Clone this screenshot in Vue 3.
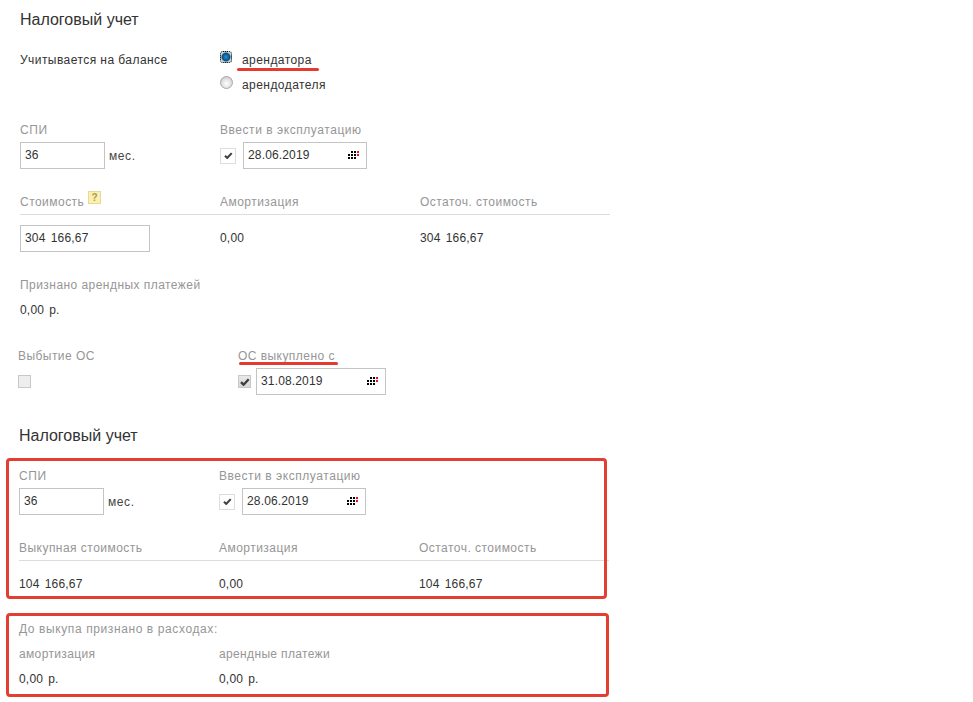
<script setup>
const dots = []
for (let r = 0; r < 3; r++) {
  for (let c = 0; c < 4; c++) {
    if (r === 0 && c === 0) continue
    if (r === 2 && c === 3) continue
    dots.push({ x: c * 3, y: r * 3, fill: c === 3 ? '#e8102a' : '#000' })
  }
}
</script>

<template>
  <main class="page">
    <section class="sec first">
      <h2 class="title">Налоговый учет</h2>

      <div class="grid balance">
        <div class="text">Учитывается на балансе</div>
        <div class="radios">
          <label class="radio-row"><span class="radio on"></span><span class="text">арендатора</span></label>
          <label class="radio-row"><span class="radio"></span><span class="text">арендодателя</span></label>
        </div>
      </div>

      <div class="grid terms">
        <div>
          <div class="label">СПИ</div>
          <div class="field"><div class="input w85">36</div><span class="unit">мес.</span></div>
        </div>
        <div>
          <div class="label">Ввести в эксплуатацию</div>
          <div class="field">
            <span class="check"><svg width="9" height="7" viewBox="0 0 12 10"><path d="M1 5.2 L4.2 8.4 L10.6 1.6" fill="none" stroke="#404040" stroke-width="3"/></svg></span>
            <div class="input date w124">28.06.2019
              <svg class="cal" width="11" height="8" viewBox="0 0 11 8"><rect v-for="(d, i) in dots" :key="i" :x="d.x" :y="d.y" width="2" height="2" :fill="d.fill"/></svg>
            </div>
          </div>
        </div>
      </div>

      <div class="grid head">
        <div class="label has-help">Стоимость<span class="help">?</span></div>
        <div class="label">Амортизация</div>
        <div class="label">Остаточ. стоимость</div>
      </div>
      <div class="grid cost">
        <div class="input w130 num">304 166,67</div>
        <div class="text num">0,00</div>
        <div class="text num">304 166,67</div>
      </div>

      <div class="label recognized">Признано арендных платежей</div>
      <div class="text value num">0,00 р.</div>

      <div class="grid disposal">
        <div>
          <div class="label">Выбытие ОС</div>
          <div class="field"><span class="box off"></span></div>
        </div>
        <div>
          <div class="label">ОС выкуплено с</div>
          <div class="field">
            <span class="box"><svg width="10" height="8" viewBox="0 0 12 10"><path d="M1 5.2 L4.2 8.4 L10.6 1.6" fill="none" stroke="#404040" stroke-width="3"/></svg></span>
            <div class="input date w130">31.08.2019
              <svg class="cal" width="11" height="8" viewBox="0 0 11 8"><rect v-for="(d, i) in dots" :key="i" :x="d.x" :y="d.y" width="2" height="2" :fill="d.fill"/></svg>
            </div>
          </div>
        </div>
      </div>
    </section>

    <section class="sec second">
      <h2 class="title">Налоговый учет</h2>
      <div class="grid terms terms2">
        <div>
          <div class="label">СПИ</div>
          <div class="field"><div class="input w85">36</div><span class="unit">мес.</span></div>
        </div>
        <div>
          <div class="label">Ввести в эксплуатацию</div>
          <div class="field">
            <span class="check"><svg width="9" height="7" viewBox="0 0 12 10"><path d="M1 5.2 L4.2 8.4 L10.6 1.6" fill="none" stroke="#404040" stroke-width="3"/></svg></span>
            <div class="input date w124">28.06.2019
              <svg class="cal" width="11" height="8" viewBox="0 0 11 8"><rect v-for="(d, i) in dots" :key="i" :x="d.x" :y="d.y" width="2" height="2" :fill="d.fill"/></svg>
            </div>
          </div>
        </div>
      </div>
      <div class="grid head">
        <div class="label">Выкупная стоимость</div>
        <div class="label">Амортизация</div>
        <div class="label">Остаточ. стоимость</div>
      </div>
      <div class="grid totals">
        <div class="text num">104 166,67</div>
        <div class="text num">0,00</div>
        <div class="text num">104 166,67</div>
      </div>
      <div class="label before">До выкупа признано в расходах:</div>
      <div class="grid sub">
        <div class="label">амортизация</div>
        <div class="label">арендные платежи</div>
      </div>
      <div class="grid subvals">
        <div class="text num">0,00 р.</div>
        <div class="text num">0,00 р.</div>
      </div>
    </section>

    <i class="mark u1"></i>
    <i class="mark u2"></i>
    <i class="frame f1"></i>
    <i class="frame f2"></i>
  </main>
</template>

<style>
body { background: #fff; }
</style>

<style scoped>
.page {
  position: relative;
  width: 973px;
  height: 702px;
  overflow: hidden;
  background: #fff;
  font-family: "Liberation Sans", Arial, sans-serif;
  font-size: 12px;
  line-height: 16px;
  color: #333;
}
.sec { width: 590px; }
.first { margin-left: 20px; padding-top: 10px; }
.second { margin-left: 19px; margin-top: 31px; }
.title {
  margin: 0;
  font-size: 16px;
  line-height: 20px;
  font-weight: 400;
  color: #333;
}
.grid { display: grid; grid-template-columns: 200px 200px 190px; }
.label, .text { height: 15px; padding-top: 1px; }
.label { color: #969696; letter-spacing: 0.45px; }
.text { color: #333; letter-spacing: 0.44px; }
.num { letter-spacing: 0.2px; word-spacing: 1.5px; }
.balance { margin-top: 21px; }
.radios { display: flex; flex-direction: column; gap: 9px; }
.radio-row { display: flex; align-items: center; gap: 9px; height: 16px; }
.radio {
  box-sizing: border-box;
  width: 13px;
  height: 13px;
  border-radius: 50%;
  border: 1px solid #a8a8a8;
  background: radial-gradient(circle at 50% 60%, #fff 0%, #e6e6e6 45%, #bbb 100%);
  margin-top: -4px;
}
.radio.on {
  width: 12px;
  height: 12px;
  margin-right: 1px;
  border: 1px dotted #111;
  border-radius: 3px;
  background: radial-gradient(circle at 50% 50%, #2a8fd0 0%, #0a6aa8 34%, #0c4a74 52%, #c4d0d8 72%, #e4eaee 100%);
}
.terms { margin-top: 29px; }
.terms2 { margin-top: 21px; }
.terms .label { letter-spacing: 0.55px; }
.field { display: flex; align-items: center; margin-top: 5px; height: 27px; }
.input {
  box-sizing: border-box;
  height: 27px;
  border: 1px solid #c4c4c4;
  padding: 0 4px;
  line-height: 25px;
  color: #333;
  background: #fff;
}
.w85 { width: 85px; }
.w124 { width: 124px; }
.w130 { width: 130px; }
.unit { margin-left: 4px; padding-top: 1px; color: #444; letter-spacing: 0.6px; }
.date { display: flex; align-items: center; justify-content: space-between; padding-right: 7px; letter-spacing: 0.15px; }
.cal { flex: none; margin-top: -1px; }
.check {
  box-sizing: border-box;
  display: flex;
  align-items: center;
  justify-content: center;
  width: 16px;
  height: 16px;
  margin-right: 7px;
  border: 1px solid #ddd;
  background: #fff;
}
.box {
  box-sizing: border-box;
  display: flex;
  align-items: center;
  justify-content: center;
  width: 13px;
  height: 13px;
  margin-right: 5px;
  border: 1px solid #c8c8c8;
  background: linear-gradient(#e8e8e8, #d8d8d8);
}
.box.off { background: #eee; }
.head {
  margin-top: 24px;
  padding-bottom: 5px;
  border-bottom: 1px solid #ddd;
}
.head .label { letter-spacing: 0.47px; }
.has-help { position: relative; }
.help {
  position: absolute;
  left: 68px;
  top: -2px;
  box-sizing: border-box;
  width: 13px;
  height: 13px;
  border: 1px solid #e6d99a;
  background: #fbf0b0;
  color: #a89b50;
  font-size: 10px;
  font-weight: 700;
  line-height: 11px;
  text-align: center;
  letter-spacing: 0;
}
.cost { margin-top: 10px; }
.cost .text { margin-top: 4px; }
.recognized { margin-top: 24px; }
.value { margin-top: 9px; }
.disposal { margin-top: 30px; margin-left: -2px; grid-template-columns: 220px 200px; }
.totals { margin-top: 14px; }
.before { margin-top: 29px; letter-spacing: 0.6px; }
.sub { margin-top: 9px; }
.sub .label { letter-spacing: 0.35px; }
.subvals { margin-top: 9px; }
.mark {
  position: absolute;
  display: block;
  height: 3px;
  border-radius: 2px;
  background: #e53a30;
}
.u1 { left: 237px; top: 68px; width: 82px; }
.u2 { left: 239px; top: 362px; width: 99px; }
.frame {
  position: absolute;
  display: block;
  box-sizing: border-box;
  border: 3px solid #e33e32;
  border-radius: 4px;
}
.f1 { left: 6px; top: 458px; width: 601px; height: 141px; }
.f2 { left: 6px; top: 613px; width: 603px; height: 84px; }
</style>
